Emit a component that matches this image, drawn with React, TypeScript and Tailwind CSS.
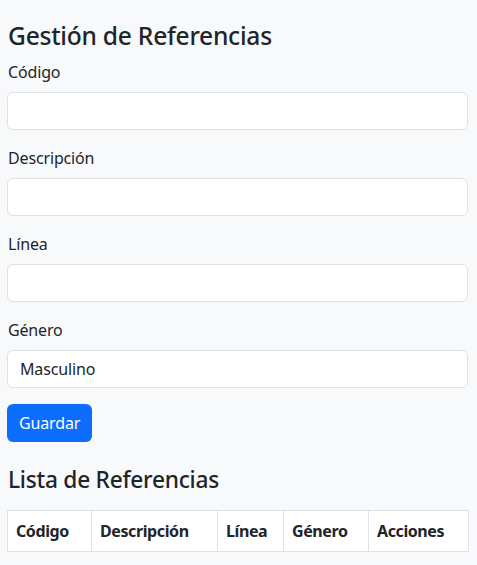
const fields = ["Código", "Descripción", "Línea"];

const columns = [
  { label: "Código", w: "w-[84px]" },
  { label: "Descripción", w: "w-[126px]" },
  { label: "Línea", w: "w-[66px]" },
  { label: "Género", w: "w-[85px]" },
  { label: "Acciones", w: "w-[100px]" },
];

const App = () => (
  <div className="min-h-screen bg-[#f8f9fa] text-[#212529] font-['Noto_Sans',sans-serif] tracking-[-0.15px]">
    <div className="pl-[7px] pr-[9px] pt-[21px]">
      <h2 className="text-[24.6px] leading-[30.6px] font-medium tracking-[-0.25px] mb-2 pl-px">Gestión de Referencias</h2>
      <form>
        {fields.map((f) => (
          <div key={f} className="mb-4">
            <label className="block text-base leading-6 mb-2 pl-px">{f}</label>
            <input
              type="text"
              className="block w-full h-[38px] rounded-md border border-[#dee2e6] bg-white px-3 outline-none"
            />
          </div>
        ))}
        <div className="mb-4">
          <label className="block text-base leading-6 mb-2 pl-px">Género</label>
          <select className="block w-full h-[38px] rounded-md border border-[#dee2e6] bg-white px-3 appearance-none text-base outline-none">
            <option>Masculino</option>
            <option>Femenino</option>
          </select>
        </div>
        <button
          type="button"
          className="h-[38px] rounded-md bg-[#0d6efd] px-3 text-base text-white"
        >
          Guardar
        </button>
      </form>
      <h3 className="mt-6 mb-4 text-[22.7px] leading-7 font-medium tracking-[-0.25px] pl-px">Lista de Referencias</h3>
      <table className="w-full border-collapse bg-white table-fixed">
        <thead>
          <tr>
            {columns.map((c) => (
              <th
                key={c.label}
                className={`${c.w} border border-[#dee2e6] px-2 py-2 text-left font-bold leading-6 tracking-[-0.4px]`}
              >
                {c.label}
              </th>
            ))}
          </tr>
        </thead>
        <tbody />
      </table>
    </div>
  </div>
);

export default App;
